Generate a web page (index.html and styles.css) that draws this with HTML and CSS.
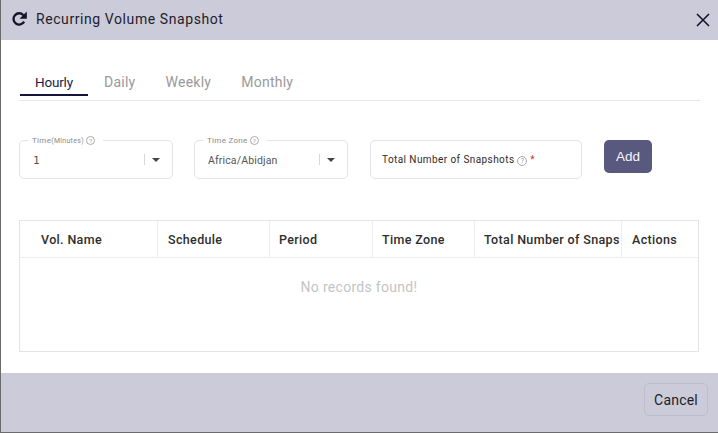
FILE: index.html
```html
<!DOCTYPE html>
<html lang="en">
<head>
    <meta charset="UTF-8">
    <meta name="viewport" content="width=device-width, initial-scale=1.0">
    <title>Recurring Volume Snapshot</title>
    <link rel="stylesheet" href="styles.css">
</head>
<body>
    <div class="modal">
        <div class="modal-header">
            <svg class="refresh-icon" width="16" height="16" viewBox="0 0 15 15" fill="none">
                <path d="M12.3 10A5.3 5.3 0 1 1 11.6 3.9" stroke="#14142b" stroke-width="2.2"/>
                <path d="M14.8 0.4v6.8H8z" fill="#14142b"/>
            </svg>
            <span class="modal-title">Recurring Volume Snapshot</span>
            <svg class="close-icon" width="14" height="14" viewBox="0 0 14 14" fill="none">
                <path d="M1 1l12 12M13 1L1 13" stroke="#14142b" stroke-width="1.6"/>
            </svg>
        </div>

        <div class="modal-body">
            <div class="tabs">
                <div class="tab active">Hourly</div>
                <div class="tab">Daily</div>
                <div class="tab">Weekly</div>
                <div class="tab">Monthly</div>
            </div>

            <div class="form-row">
                <div class="field field-time">
                    <span class="float-label">Time<small>(Minutes)</small> <span class="help">?</span></span>
                    <span class="value mono">1</span>
                    <span class="select-arrows"><i class="sep"></i><i class="caret"></i></span>
                </div>
                <div class="field field-zone">
                    <span class="float-label">Time Zone <span class="help">?</span></span>
                    <span class="value">Africa/Abidjan</span>
                    <span class="select-arrows"><i class="sep"></i><i class="caret"></i></span>
                </div>
                <div class="field field-total">
                    <span class="placeholder">Total Number of Snapshots <span class="help">?</span> <span class="req">*</span></span>
                </div>
                <button class="btn-add">Add</button>
            </div>

            <div class="table-wrap">
                <div class="table-head">
                    <div class="th th-name">Vol. Name</div>
                    <div class="th th-schedule">Schedule</div>
                    <div class="th th-period">Period</div>
                    <div class="th th-zone">Time Zone</div>
                    <div class="th th-total">Total Number of Snaps</div>
                    <div class="th th-actions">Actions</div>
                </div>
                <div class="empty">No records found!</div>
            </div>
        </div>

        <div class="modal-footer">
            <button class="btn-cancel">Cancel</button>
        </div>
    </div>
</body>
</html>
```

FILE: styles.css
```css
body {
    font-family: "Roboto", "Liberation Sans", sans-serif;
    margin: 0;
    background-color: #6b6b6b;
    color: #14142b;
    overflow: hidden;
}

.modal {
    margin-left: 1px;
    width: 717px;
    height: 432px;
    display: flex;
    flex-direction: column;
    background-color: #fff;
}

.modal-header {
    height: 40px;
    flex: none;
    display: flex;
    align-items: center;
    padding: 0 8px 3px 10px;
    box-sizing: border-box;
    background-color: #cccbd9;
}

.refresh-icon {
    flex: none;
}

.modal-title {
    margin-left: 9px;
    font-size: 14px;
    letter-spacing: 0.58px;
    color: #1d1d2c;
}

.close-icon {
    margin-left: auto;
    margin-top: 2px;
}

.modal-body {
    flex: 1;
    padding: 30px 18px 0 18px;
}

.tabs {
    display: flex;
    height: 30px;
    border-bottom: 1px solid #e6e6e6;
}

.tab {
    height: 26px;
    padding: 4px 15px 0;
    box-sizing: border-box;
    font-size: 14px;
    line-height: 16px;
    letter-spacing: 0.25px;
    color: #9a9a9a;
}

.tab.active {
    color: #1c1c4a;
    border-bottom: 2px solid #14143c;
    width: 68px;
    margin: 0 1px;
    font-size: 13.5px;
    letter-spacing: -0.2px;
}

.form-row {
    display: flex;
    align-items: flex-start;
    margin-top: 39px;
}

.field {
    position: relative;
    height: 39px;
    box-sizing: border-box;
    border: 1px solid #e4e4e4;
    border-radius: 5px;
    display: flex;
    align-items: center;
}

.field-time {
    width: 154px;
    padding-left: 13px;
}

.field-zone {
    width: 154px;
    margin-left: 21px;
    padding-left: 13px;
}

.field-total {
    width: 212px;
    margin-left: 22px;
    padding-left: 11px;
}

.float-label {
    position: absolute;
    top: -5px;
    left: 8px;
    padding: 0 8px 0 4px;
    background-color: #fff;
    font-size: 8px;
    line-height: 9px;
    letter-spacing: 0.3px;
    color: #8a8a8a;
    white-space: nowrap;
}

.float-label small {
    font-size: 7px;
}

.help {
    display: inline-block;
    width: 7px;
    height: 7px;
    line-height: 7px;
    border: 1px solid #aaa;
    border-radius: 50%;
    font-size: 6px;
    text-align: center;
    color: #999;
    letter-spacing: 0;
    vertical-align: 0;
}

.value {
    font-size: 10.5px;
    color: #555;
    letter-spacing: 0.15px;
    margin-top: 2px;
}

.mono {
    font-family: "DejaVu Sans Mono", monospace;
    font-size: 11px;
}

.select-arrows {
    position: absolute;
    right: 12px;
    top: 13px;
    display: flex;
    align-items: center;
    gap: 7px;
}

.sep {
    width: 1px;
    height: 11px;
    background-color: #d8d8d8;
}

.caret {
    width: 0;
    height: 0;
    border-left: 4px solid transparent;
    border-right: 4px solid transparent;
    border-top: 4px solid #444;
}

.placeholder {
    font-size: 10px;
    letter-spacing: 0.42px;
    color: #2c2c2c;
    margin-top: 1px;
    white-space: nowrap;
}

.placeholder .help {
    width: 8px;
    height: 8px;
    line-height: 8px;
    font-size: 7px;
}

.req {
    color: #c0392b;
}

.btn-add {
    width: 48px;
    height: 33px;
    margin-left: 22px;
    padding: 0;
    border: none;
    border-radius: 5px;
    background-color: #59597f;
    color: #f5f5f8;
    font-family: "Liberation Sans", sans-serif;
    font-size: 13.5px;
    cursor: pointer;
}

.table-wrap {
    margin-top: 41px;
    width: 680px;
    height: 132px;
    box-sizing: border-box;
    border: 1px solid #e4e4e4;
}

.table-head {
    display: flex;
    height: 36px;
    border-bottom: 1px solid #eeeeee;
}

.th {
    box-sizing: border-box;
    border-right: 1px solid #eeeeee;
    padding-left: 10px;
    font-size: 12.5px;
    font-weight: 500;
    line-height: 37px;
    letter-spacing: 0.35px;
    color: #2e2e2e;
    white-space: nowrap;
    overflow: hidden;
}

.th-name { width: 138px; padding-left: 21px; }
.th-schedule { width: 112px; }
.th-period { width: 103px; padding-left: 9px; }
.th-zone { width: 102px; padding-left: 9px; }
.th-total { width: 147px; padding-left: 9px; }
.th-actions { flex: 1; border-right: none; }

.empty {
    padding-top: 20px;
    margin-top: 1px;
    text-align: center;
    font-size: 14px;
    line-height: 17px;
    letter-spacing: 0.3px;
    color: #c4c4c4;
}

.modal-footer {
    height: 59px;
    flex: none;
    display: flex;
    justify-content: flex-end;
    padding: 10px 10px 0 0;
    box-sizing: border-box;
    background-color: #cccbd9;
}

.btn-cancel {
    width: 64px;
    height: 33px;
    padding: 0;
    border: 1px solid #bfbecd;
    border-radius: 5px;
    background-color: #cccbd9;
    color: #1d1d2c;
    font-family: "Roboto", sans-serif;
    font-size: 14px;
    letter-spacing: 0.2px;
    cursor: pointer;
}
```
